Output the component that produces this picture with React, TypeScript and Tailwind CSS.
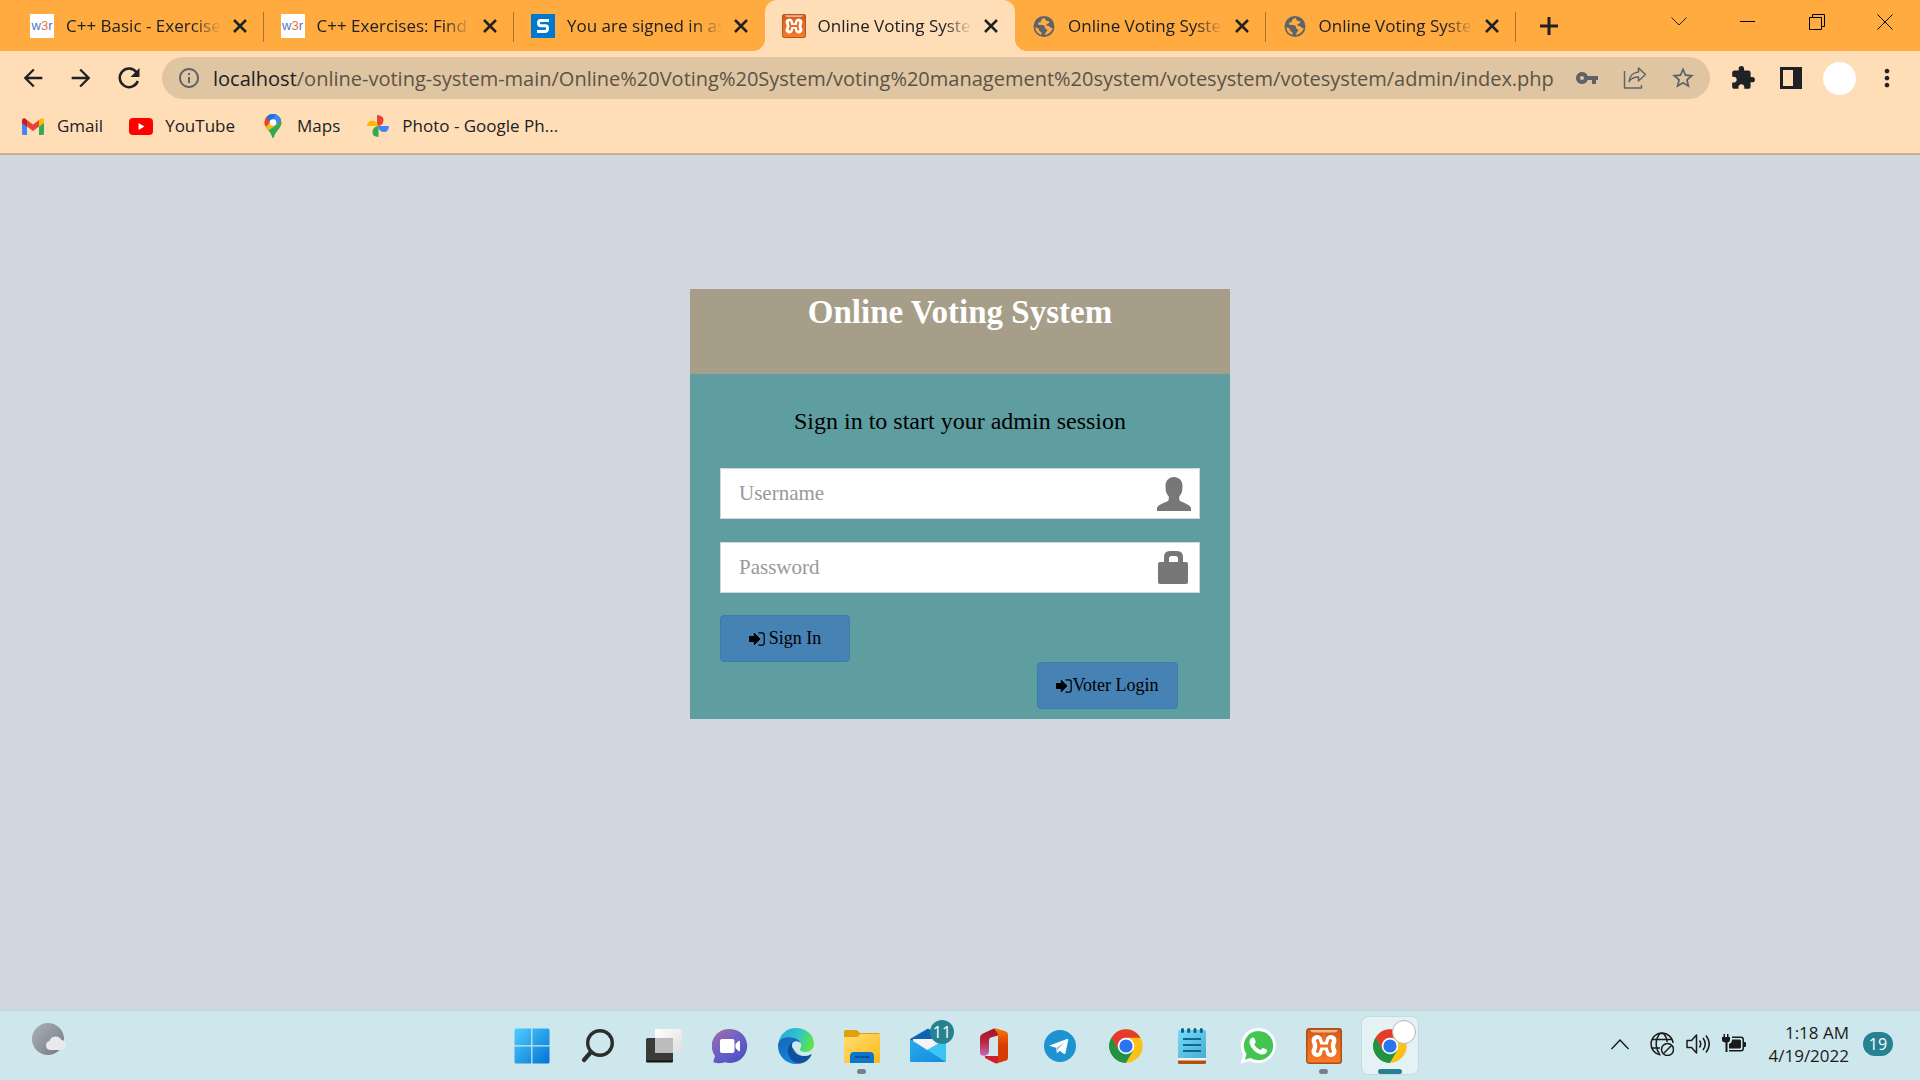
import React, { useId } from "react";
import { MdVpnKey, MdStarBorder, MdExtension, MdMoreVert, MdArrowBack, MdArrowForward, MdInfoOutline } from "react-icons/md";

type IconProps = { className?: string };

function W3r() {
  return (
    <span className="flex size-6 items-center justify-center bg-white font-['Liberation_Sans'] text-[13px] leading-none text-[#4a78c4]">
      w<span className="text-[#e8743b]">3</span>r
    </span>
  );
}

function SFavicon() {
  return (
    <svg viewBox="0 0 24 24" className="size-6">
      <path fill="#0078d0" d="M0 0h24v24H0z" />
      <path fill="none" stroke="#fff" strokeWidth="3" d="M18 6.500H9.500Q7.500 6.500 7.500 9T9.500 11.800h5.500Q16.500 11.800 16.500 14.500T14.500 17.500H6" />
    </svg>
  );
}

function Xampp({ className }: IconProps) {
  const id = useId();
  return (
    <svg viewBox="0 0 36 36" className={className} fill="none">
      <defs>
        <linearGradient id={id} x1="0" y1="0" x2="0" y2="1">
          <stop offset="0" stopColor="#c35a1c" />
          <stop offset=".25" stopColor="#dd6420" />
          <stop offset="1" stopColor="#fb7a24" />
        </linearGradient>
      </defs>
      <rect x=".7" y=".7" width="34.600" height="34.600" rx="2.500" fill={`url(#${id})`} stroke="#a9501a" strokeWidth="1.400" />
      <path d="M4 2h28q-1 2.500-4 2.500H8Q5 4.500 4 2z" fill="#f4b48a" />
      <g strokeLinecap="round">
        <path d="M11 12.500Q14 18 11 23.500M25 12.500Q22 18 25 23.500M13 18h10" stroke="#fff" strokeWidth="11" />
        <path d="M18 7v5.500M18 29v-5.500" stroke="#ec6c22" strokeWidth="3" />
        <path d="M11.500 12.500Q14 18 11.500 23.500M24.500 12.500Q22 18 24.500 23.500M13 18h10" stroke="#ec6c22" strokeWidth="3" />
      </g>
    </svg>
  );
}

function Globe() {
  return (
    <svg viewBox="0 0 24 24" className="size-6">
      <circle cx="12" cy="12.500" r="10.500" fill="#5f6368" />
      <path fill="#ffab40" d="M12.500 4c-2.500.5-3.500 1.500-3.500 3 0 1-1 1.200-2 1.500-1.300.4-1.200 1.500-.5 2.300l3.500.2c2 .1 3 1 3 2.500 0 1.200 1.500 1.300 2.200 2.500.5 1-.8 1.600-1.400 2.400-.5.700-.5 1.600-1.300 2.600 4-.5 7.500-3 8-7-1.500 0-2-.5-3-1.500s-2.500-.3-3-1.300c-.4-1 .8-1.500 1.800-1.700 1.200-.3 1.500-1.500.2-2.200-1-.6-2.500-.3-3-1.200-.3-.7.200-1.600-1-2.100zM3.300 13.500c.3 3.500 2.700 6.500 6.200 7.300 0-1.300.2-2-.6-2.800-.9-.8-2-.9-2-2.200 0-1.500-1.800-2-3.600-2.300z" />
    </svg>
  );
}

function Close() {
  return (
    <svg viewBox="0 0 14 14" className="size-[14px]" fill="none" stroke="#202124" strokeWidth="2.500">
      <path d="M1 1l12 12M13 1L1 13" />
    </svg>
  );
}

const tabs = [
  { icon: <W3r />, title: "C++ Basic - Exercises" },
  { icon: <W3r />, title: "C++ Exercises: Find the" },
  { icon: <SFavicon />, title: "You are signed in as" },
  { icon: <Xampp className="size-6" />, title: "Online Voting System", active: true },
  { icon: <Globe />, title: "Online Voting System" },
  { icon: <Globe />, title: "Online Voting System" },
];

function TabStrip() {
  return (
    <div className="flex h-[51px] bg-[#ffab40] pl-[13px]">
      <div role="tablist" className="flex w-[1503px] min-w-0">
        {tabs.map((t, i) => {
          const sep = !t.active && i !== 2;
          return (
            <div
              key={i}
              role="tab"
              aria-selected={!!t.active}
              className={
                "relative flex min-w-0 flex-1 items-center pl-[17px] pr-[17px] " + (t.active ? "rounded-t-xl bg-[#ffdeb7]" : "")
              }
            >
              <span className="shrink-0">{t.icon}</span>
              <span className="ml-3 min-w-0 flex-1 overflow-hidden whitespace-nowrap text-[17px] text-[#202124] [mask-image:linear-gradient(to_right,black_82%,transparent)]">
                {t.title}
              </span>
              <button aria-label="Close tab" className="ml-3 shrink-0">
                <Close />
              </button>
              {sep && <span className="absolute right-0 top-3 h-[30px] w-px bg-[#a9732f]" />}
              {t.active && (
                <>
                  <span className="absolute -left-3 bottom-0 size-3 bg-[radial-gradient(circle_at_0_0,transparent_12px,#ffdeb7_12px)]" />
                  <span className="absolute -right-3 bottom-0 size-3 bg-[radial-gradient(circle_at_100%_0,transparent_12px,#ffdeb7_12px)]" />
                </>
              )}
            </div>
          );
        })}
      </div>
      <button aria-label="New tab" className="ml-6 self-center">
        <svg viewBox="0 0 18 18" className="size-[18px]" stroke="#202124" strokeWidth="3">
          <path d="M9 0v18M0 9h18" />
        </svg>
      </button>
      <div className="ml-auto flex h-[43px] items-center pr-[3px]">
        <button aria-label="Search tabs" className="flex w-[68px] justify-center">
          <svg viewBox="0 0 16 9" className="h-[9px] w-4" fill="none" stroke="#202124"><path d="M.5.5L8 8 15.500.5" /></svg>
        </button>
        <button aria-label="Minimize" className="flex w-[68px] justify-center">
          <span className="h-px w-[15px] bg-black" />
        </button>
        <button aria-label="Restore" className="flex w-[72px] justify-center">
          <svg viewBox="0 0 16 16" className="size-4" fill="none" stroke="#000"><path d="M.5 3.500h12v12H.5zM3.500 3.500v-3h12v12h-3" /></svg>
        </button>
        <button aria-label="Close" className="flex w-16 justify-center">
          <svg viewBox="0 0 16 16" className="size-4" fill="none" stroke="#000"><path d="M.5.5l15 15M15.500.5l-15 15" /></svg>
        </button>
      </div>
    </div>
  );
}

function Gmail() {
  return (
    <svg viewBox="0 0 22 17" className="h-[17px] w-[22px]">
      <path fill="#4285f4" d="M0 3v12.500Q0 17 1.500 17H5V7z" />
      <path fill="#34a853" d="M22 3v12.500q0 1.500-1.500 1.500H17V7z" />
      <path fill="#ea4335" d="M5 8.500V2l6 4.500L17 2v6.500L11 13z" />
      <path fill="#c5221f" d="M0 2.500V5l5 3.700V2L3.500.7C2-.4 0 .6 0 2.500z" />
      <path fill="#fbbc04" d="M22 2.500V5l-5 3.700V2L18.500.7C20-.4 22 .6 22 2.500z" />
    </svg>
  );
}

function YouTube() {
  return (
    <svg viewBox="0 0 24 17" className="h-[17px] w-6">
      <rect width="24" height="17" rx="4" fill="#f00" />
      <path fill="#fff" d="M9.500 5v7l6-3.500z" />
    </svg>
  );
}

function MapsPin() {
  const id = useId();
  return (
    <svg viewBox="0 0 18 24" className="h-6 w-[18px]">
      <clipPath id={id}>
        <path d="M9 0a8.500 8.500 0 0 0-8.500 8.500c0 3 1.500 5 3.500 7.500s3.500 4.500 4 7q.2 1 1 1t1-1c.5-2.500 2-4.500 4-7s3.500-4.500 3.500-7.500A8.500 8.500 0 0 0 9 0z" />
      </clipPath>
      <g clipPath={`url(#${id})`}>
        <path fill="#34a853" d="M0 0h18v24H0z" />
        <path fill="#fbbc04" d="M0 8l5-2 9 4L3.500 17 0 14z" />
        <path fill="#ea4335" d="M0 0l3 2.500L8 7 1.500 13-2 8z" />
        <path fill="#1a73e8" d="M2 3L7 8l6-8H4z" />
        <path fill="#4285f4" d="M6 9L13-1l7 6-3 1-6 6z" />
      </g>
      <circle cx="9" cy="8.500" r="3.300" fill="#fff" />
    </svg>
  );
}

function Photos() {
  return (
    <svg viewBox="0 0 22 22" className="size-[22px]">
      <path fill="#ea4335" d="M10 0q7 .5 6.500 5.500Q16 11 10 11z" />
      <path fill="#4285f4" d="M22 11q-.5 6.500-5.500 6T11 11z" />
      <path fill="#34a853" d="M11.500 22Q5 21.500 5.500 16.500T11.500 11z" />
      <path fill="#fbbc04" d="M0 11Q.5 5 5.500 5.500T11 11z" />
    </svg>
  );
}

function Reload() {
  return (
    <svg viewBox="0 0 28 28" className="size-7" fill="none">
      <path d="M21.500 8.200A9.300 9.300 0 1 0 22.800 17" stroke="currentColor" strokeWidth="2.500" />
      <path d="M24.500 4v9h-9z" fill="currentColor" />
    </svg>
  );
}

function ShareIcon() {
  return (
    <svg viewBox="0 0 24 24" className="size-6" fill="none" stroke="#5f6368" strokeWidth="1.500" strokeLinejoin="round">
      <path d="M1.500 5v17h17V19" />
      <path d="M15.500 2l7 6.500-7 6.500v-4c-4 0-7.500 1.500-9.500 4.500.5-5.500 4.500-9 9.500-9.500z" />
    </svg>
  );
}

const bookmarks = [
  { icon: <Gmail />, label: "Gmail" },
  { icon: <YouTube />, label: "YouTube" },
  { icon: <MapsPin />, label: "Maps" },
  { icon: <Photos />, label: "Photo - Google Ph..." },
];

function Toolbar() {
  return (
    <div className="border-b-2 border-[#c9ae8f] bg-[#ffdeb7] pt-[6px]">
      <div className="flex h-[42px] items-center text-[#202124]">
        <div className="flex items-center gap-5 pl-[19px]">
          <button aria-label="Back"><MdArrowBack className="size-7" /></button>
          <button aria-label="Forward"><MdArrowForward className="size-7" /></button>
          <button aria-label="Reload"><Reload /></button>
        </div>
        <div className="ml-[19px] flex h-full min-w-0 flex-1 items-center rounded-full bg-[#dfc5a2] pl-[15px] pr-[3px] text-[#5f6368]">
          <MdInfoOutline className="size-6 shrink-0" />
          <p className="ml-3 min-w-0 flex-1 overflow-hidden whitespace-nowrap pt-0.5 text-[20px] leading-[30px] text-[#5c5348]">
            <span className="text-[#202124]">localhost</span>
            /online-voting-system-main/Online%20Voting%20System/voting%20management%20system/votesystem/votesystem/admin/index.php
          </p>
          <div className="flex shrink-0 items-center">
            <button aria-label="Passwords" className="flex w-12 justify-center"><MdVpnKey className="size-6" /></button>
            <button aria-label="Share" className="flex w-12 justify-center"><ShareIcon /></button>
            <button aria-label="Bookmark" className="flex w-12 justify-center"><MdStarBorder className="size-[26px]" /></button>
          </div>
        </div>
        <div className="flex items-center px-[9px]">
          <button aria-label="Extensions" className="flex w-12 justify-center"><MdExtension className="size-[26px]" /></button>
          <button aria-label="Side panel" className="flex w-12 justify-center">
            <svg viewBox="0 0 22 22" className="size-[22px]"><path fill="currentColor" fillRule="evenodd" d="M0 0h22v22H0zM3 3v16h10V3z" /></svg>
          </button>
          <button aria-label="Profile" className="flex w-12 justify-center">
            <span className="size-[33px] rounded-full bg-white" />
          </button>
          <button aria-label="Menu" className="flex w-12 justify-center"><MdMoreVert className="size-7" /></button>
        </div>
      </div>
      <nav className="flex h-[54px] items-center gap-[26px] pl-[21px] text-[17px] text-[#202124]">
        {bookmarks.map((b) => (
          <a key={b.label} href="#" className="flex items-center gap-3">
            <span className="flex w-6 justify-center">{b.icon}</span>
            {b.label}
          </a>
        ))}
      </nav>
    </div>
  );
}

function UserGlyph() {
  return (
    <svg viewBox="0 0 34 34" className="size-[34px]" fill="#777">
      <path d="M17 0c5 0 8.500 3.500 8.500 9 0 5-.8 8-3.300 10.500V22c0 1.500 1 2.200 3 3 3.500 1.500 8.800 4 8.800 6v3H0v-3c0-2 5.300-4.500 8.800-6 2-.8 3-1.500 3-3v-2.500C9.300 17 8.500 14 8.500 9c0-5.500 3.500-9 8.500-9z" />
    </svg>
  );
}

function LockGlyph() {
  return (
    <svg viewBox="0 0 30 33" className="h-[33px] w-[30px]" fill="#777">
      <path fillRule="evenodd" d="M6 11V6q0-6 6-6h7q6 0 6 6v5h3q2 0 2 2v18q0 2-2 2H2q-2 0-2-2V13q0-2 2-2zm5 0h9V7.500Q20 5 17.500 5h-4Q11 5 11 7.500z" />
    </svg>
  );
}

function SignInGlyph() {
  return (
    <svg viewBox="0 0 16 14" className="h-[14px] w-4 shrink-0">
      <path d="M.5 4.500h4.800V1.200L11 7l-5.700 5.800V9.500H.5z" stroke="#000" strokeLinejoin="round" />
      <path d="M9.500.8H13q2.200 0 2.200 2.200v8q0 2.200-2.200 2.200H9.500" fill="none" stroke="#000" strokeWidth="1.200" />
    </svg>
  );
}

function Login() {
  return (
    <main className="flex flex-1 items-start justify-center bg-[#d2d6de] pt-[134px] font-['Liberation_Serif',serif]">
      <section className="w-[540px]">
        <header className="h-[85px] bg-[#a69e88] pt-1">
          <h1 className="text-center text-[33px] font-bold leading-[38px] text-white">Online Voting System</h1>
        </header>
        <div className="bg-[#5f9ea0] px-[30px] pb-[10px] pt-[30px] text-black">
          <p className="text-center text-[24px] leading-[34px]">Sign in to start your admin session</p>
          <form className="mt-[30px]" onSubmit={(e) => e.preventDefault()}>
            <div className="relative">
              <input aria-label="Username" placeholder="Username" className="block h-[51px] w-full border border-[#d2d6de] bg-white px-[18px] text-[21px] placeholder:text-[#999]" />
              <span className="pointer-events-none absolute right-[9px] top-[9px]"><UserGlyph /></span>
            </div>
            <div className="relative mt-[23px]">
              <input type="password" aria-label="Password" placeholder="Password" className="block h-[51px] w-full border border-[#d2d6de] bg-white px-[18px] text-[21px] placeholder:text-[#999]" />
              <span className="pointer-events-none absolute right-3 top-[9px]"><LockGlyph /></span>
            </div>
            <button type="submit" className="mt-[22px] flex h-[47px] w-[130px] items-center justify-center gap-1 rounded-[4px] border border-[#367fa9] bg-[#4682b4] text-[18px]">
              <SignInGlyph />
              Sign In
            </button>
            <div className="flex justify-end pr-[22px]">
              <a href="#" className="flex h-[47px] w-[141px] items-center justify-center rounded-[4px] border border-[#367fa9] bg-[#4682b4] text-[18px]">
                <SignInGlyph />
                Voter Login
              </a>
            </div>
          </form>
        </div>
      </section>
    </main>
  );
}

function Start() {
  const id = useId();
  return (
    <svg viewBox="0 0 36 36" className="size-9">
      <linearGradient id={id} gradientUnits="userSpaceOnUse" x1="0" y1="0" x2="36" y2="36">
        <stop offset="0" stopColor="#4fd0ff" /><stop offset="1" stopColor="#0072d2" />
      </linearGradient>
      <path fill={`url(#${id})`} d="M2 .5h15.200v16.700H.5V2Q.5.500 2 .5zM18.400.5H34Q35.500.5 35.500 2v15.200H18.400zM.5 18.400h16.700v17.100H2Q.5 35.500.5 34zM18.400 18.400h17.100V34q0 1.500-1.500 1.500H18.400z" />
    </svg>
  );
}

function Search() {
  return (
    <svg viewBox="0 0 36 36" className="size-9" fill="none" stroke="#2d2d2d" strokeLinecap="round">
      <circle cx="20" cy="15" r="12.300" strokeWidth="3.400" />
      <path d="M11 24L4 32" strokeWidth="4.200" />
    </svg>
  );
}

function TaskView() {
  const id = useId();
  return (
    <svg viewBox="0 0 36 36" className="size-9">
      <linearGradient id={id} x1="0" y1="0" x2="1" y2="1"><stop offset="0" stopColor="#fff" /><stop offset="1" stopColor="#dedede" /></linearGradient>
      <rect x="0" y="10" width="27" height="24" rx="1.500" fill="#3a3a38" />
      <path d="M0 32.500h27V33q0 1.500-1.500 1.500h-24Q0 34.500 0 33z" fill="#111" />
      <rect x="9" y="1" width="27" height="24" rx="1" fill={`url(#${id})`} />
      <path d="M9 10h18v15H9z" fill="#bcbcbc" />
    </svg>
  );
}

function Chat() {
  const id = useId();
  return (
    <svg viewBox="0 0 36 36" className="size-9">
      <linearGradient id={id} x1="0" y1=".2" x2=".6" y2="1"><stop offset="0" stopColor="#9b6aae" /><stop offset=".45" stopColor="#6f62c4" /><stop offset="1" stopColor="#5152c4" /></linearGradient>
      <path fill={`url(#${id})`} d="M18 1a17 17 0 1 1-5 33.200Q7 36 2 34.500q-1-.5-.5-1.500l1.500-5A17 17 0 0 1 18 1z" />
      <rect x="8" y="11" width="14.500" height="14" rx="2" fill="#fff" />
      <path fill="#fff" d="M23.500 16l3-3q1.500-1 1.500 1v8q0 2-1.500 1l-3-3z" />
    </svg>
  );
}

function Edge() {
  const id = useId();
  return (
    <svg viewBox="0 0 36 36" className="size-9">
      <linearGradient id={id + "a"} x1="0" y1=".3" x2="1" y2=".6"><stop offset="0" stopColor="#2aa5e0" /><stop offset=".5" stopColor="#2ec6c8" /><stop offset="1" stopColor="#62e63c" /></linearGradient>
      <linearGradient id={id + "b"} x1="0" y1="0" x2=".4" y2="1"><stop offset="0" stopColor="#1566b8" /><stop offset="1" stopColor="#1285dc" /></linearGradient>
      <path fill={`url(#${id}a)`} d="M.5 15C2 6 9 0 18 0c10 0 18 7 18 15.500C36 21 32 24 27.500 24c-4 0-6-1.500-5.500-3 1-2 1.500-3 1-5C22 11 16 9 11 9S2.500 11 .5 15z" />
      <path fill={`url(#${id}b)`} d="M0 18C0 12 5 9 11 9c6 0 11 3 12 6-1-1-3-1.500-5-1.500-4 1-7 5-7 10C11 29 15 34 20 36h-2C8 36 0 28 0 18z" />
      <path fill="#10509a" d="M14 14.500c-3 2-5 6-4 10.500 1 5 5 10 10.500 10.700C26 35.500 31 32 33.500 27c.3-.8-.2-1-.8-.7-5 2.200-11 1.700-14.700-2.300-3-3-4-6-3-8.500z" />
      <circle cx="18" cy="17.500" r="4" fill="#cfe7ec" />
      <path fill="#cfe7ec" d="M15 20c2 5 8 8 18 5l-1 2c-5 2-11 1-14-2-2-2-3-4-3-5z" />
    </svg>
  );
}

function Explorer() {
  const id = useId();
  return (
    <svg viewBox="0 0 36 36" className="size-9">
      <linearGradient id={id} x1="0" y1="0" x2="1" y2="1"><stop offset="0" stopColor="#ffdf70" /><stop offset="1" stopColor="#fbb81c" /></linearGradient>
      <path fill="#e0a008" d="M1.500 2H12q1 0 1.700.8L16 5h18.500Q36 5 36 6.500V12H0V3.500Q0 2 1.500 2z" />
      <path fill={`url(#${id})`} d="M0 9h12q1.500 0 2.500-1l2-2H36v27.500q0 1.500-1.500 1.500h-33Q0 35 0 33.500z" />
      <path fill="#0c76c9" d="M6 35v-7q0-4 4-4h16q4 0 4 4v7z" />
      <path stroke="#0a4f92" strokeWidth="2" strokeLinecap="round" d="M12 29h13" />
    </svg>
  );
}

function Mail() {
  const id = useId();
  return (
    <svg viewBox="0 0 36 36" className="size-9">
      <linearGradient id={id} x1="0" y1="0" x2="1" y2="1"><stop offset="0" stopColor="#26aceb" /><stop offset="1" stopColor="#1689de" /></linearGradient>
      <path fill="#0d63b4" d="M0 11L18 .5 36 11v6H0z" />
      <path fill="#f4f4f4" d="M3 11h30v5L18 25 3 15z" />
      <path fill="#3cc5f4" d="M36 11v23L16 22.500z" />
      <path fill={`url(#${id})`} d="M0 11l36 23H1.500Q0 34 0 32.500z" />
    </svg>
  );
}

function Office() {
  const id = useId();
  return (
    <svg viewBox="0 0 36 36" className="size-9">
      <linearGradient id={id} x1="0" y1="0" x2="0" y2="1"><stop offset="0" stopColor="#a4141c" /><stop offset=".5" stopColor="#b92742" /><stop offset="1" stopColor="#c56ab4" /></linearGradient>
      <linearGradient id={id + "o"} x1="0" y1="0" x2="0" y2="1"><stop offset="0" stopColor="#f8760c" /><stop offset=".5" stopColor="#d83b01" /></linearGradient>
      <path fill={`url(#${id})`} d="M18 .5l4 1v6l-7 2q-2 .7-2 3v11q0 2-1.500 3l-2 1q-5.500 1-5.500-3V10q0-3 3-4.500z" />
      <path fill={`url(#${id}o)`} d="M18 .5q1-.3 3 .3l8.500 2.500q2.500.7 2.500 3.500v23q0 2.500-2.500 3L22 35V6z" />
      <path fill="#cf1f35" d="M9 28h13v7.300q-2 .3-4-.5l-8-4.300Q8 29 9 28z" />
    </svg>
  );
}

function Telegram() {
  return (
    <svg viewBox="0 0 36 36" className="size-9">
      <circle cx="18" cy="18" r="16" fill="#1d93d2" />
      <path fill="#fff" d="M7.500 17.500L25 11q1.500-.4 1.200 1.300l-2.700 12.700q-.4 1.500-1.800.7l-4-3-2 2q-.8.600-1-.5l-.7-4.400-5.800-1.700q-1.500-.3-.7-.6z" />
      <path fill="#a9c9dd" d="M14 20l8.500-5.500-6.500 7-.7 3.500z" />
    </svg>
  );
}

function Chrome() {
  return (
    <svg viewBox="0 0 36 36" className="size-9">
      <circle cx="18" cy="18" r="16.700" fill="#fbc116" />
      <path fill="#229342" d="M3.500 9.650A16.700 16.700 0 0 0 18 34.700l7.200-12.500-14.400 0z" />
      <path fill="#e33b2e" d="M3.540 9.650A16.700 16.700 0 0 1 32.460 9.650H18L10.800 22.200z" />
      <path fill="#229342" d="M3.540 9.650L10.800 22.200l7.200 3L18 34.700A16.700 16.700 0 0 1 3.540 9.650z" />
      <circle cx="18" cy="18" r="8.300" fill="#fff" />
      <circle cx="18" cy="18" r="6.600" fill="#2a74f0" />
    </svg>
  );
}

function Notepad() {
  const id = useId();
  return (
    <svg viewBox="0 0 36 36" className="size-9">
      <linearGradient id={id} x1="0" y1="0" x2="1" y2="1"><stop offset="0" stopColor="#7bdaf4" /><stop offset="1" stopColor="#44aed4" /></linearGradient>
      <path fill="#b4500c" d="M4 30h28v4.500q0 1.500-1.500 1.500h-25Q4 36 4 34.500z" />
      <path fill="#f2f2f2" d="M4 28h28v4.500H4z" />
      <path fill={`url(#${id})`} d="M5.500 2h25Q32 2 32 3.500V30H4V3.500Q4 2 5.500 2z" />
      <path stroke="#0a5f8c" strokeWidth="3" strokeLinecap="round" d="M8.500 1.500v2M14.700 1.500v2M21 1.500v2M27.300 1.500v2" />
      <path stroke="#0a6a94" strokeWidth="2" d="M9 11h18M9 17h18M9 23h18" />
    </svg>
  );
}

function WhatsApp() {
  return (
    <svg viewBox="0 0 36 36" className="size-9">
      <path fill="#fff" d="M18.500 0a17.500 17.500 0 1 1-8.300 33L.5 35.700l2.600-9.500A17.500 17.500 0 0 1 18.500 0z" />
      <path fill="#42c552" d="M18.500 3a14.600 14.600 0 1 1-7.800 26.900L5 31.500l1.500-5.600A14.600 14.600 0 0 1 18.500 3z" />
      <path fill="#fff" d="M13 9.500c.8 0 1.200.3 1.500 1l1.200 3c.2.600 0 1-1.500 2.800 1.500 3 3.500 4.500 6.500 5.700 1.500-2 2-2.300 2.700-2l3 1.500c.6.300.8.600.7 1.300-.3 2.500-2.500 3.700-4.600 3.700-6 0-13-7-13-12.500 0-2 1.500-4.500 3.500-4.500z" />
    </svg>
  );
}

type App = { name: string; icon: React.ReactNode; running?: boolean; active?: boolean; badge?: string };

const apps: App[] = [
  { name: "Start", icon: <Start /> },
  { name: "Search", icon: <Search /> },
  { name: "Task view", icon: <TaskView /> },
  { name: "Chat", icon: <Chat /> },
  { name: "Edge", icon: <Edge /> },
  { name: "File Explorer", icon: <Explorer />, running: true },
  { name: "Mail", icon: <Mail />, badge: "11" },
  { name: "Office", icon: <Office /> },
  { name: "Telegram", icon: <Telegram /> },
  { name: "Chrome", icon: <Chrome /> },
  { name: "Notepad", icon: <Notepad /> },
  { name: "WhatsApp", icon: <WhatsApp /> },
  { name: "XAMPP", icon: <Xampp className="size-9" />, running: true },
  { name: "Chrome window", icon: <Chrome />, active: true },
];

function Tray() {
  return (
    <div className="flex items-center justify-end pb-[3px] pr-[27px] text-[#1b1b1b]">
      <button aria-label="Show hidden icons">
        <svg viewBox="0 0 18 11" className="h-[11px] w-[18px]" fill="none" stroke="currentColor" strokeWidth="1.400"><path d="M.5 10L9 1l8.500 9" /></svg>
      </button>
      <button aria-label="Network, volume and battery" className="ml-[21px] flex items-center gap-3">
        <svg viewBox="0 0 24 24" className="size-6" fill="none" stroke="currentColor" strokeWidth="1.500">
          <path d="M10.500 22.900A11 11 0 1 1 23 11" />
          <path d="M9.500 22C5 16 5 7 10 1.500h3.500C15.800 4 17 7 17.200 10M2 7.500h20M2 16h8" />
          <circle cx="17.500" cy="17.500" r="6" />
          <path d="M13.500 21.500l8-8" />
        </svg>
        <svg viewBox="0 0 24 24" className="size-6" fill="none" stroke="currentColor" strokeWidth="1.500">
          <path d="M1 8.500h4.500l5-5.500v18l-5-5.500H1z" strokeLinejoin="round" />
          <path d="M13.500 8.500q2.500 3.500 0 7M17 6q4.500 6 0 12M20 3.500q6.500 8.500 0 17" />
        </svg>
        <svg viewBox="0 0 24 24" className="size-6" fill="currentColor">
          <path d="M1.500 2H3v3h2V2h1.500v3H8v3q0 2-2.500 2.500V20H3.500v-9.500Q0 10 0 8V5h1.500z" />
          <path fillRule="evenodd" d="M10 4.500h9q3 0 3 3V10h1q1 0 1 1v3q0 1-1 1h-1v1.500q0 3-3 3H7V18h12q1.500 0 1.500-1.500v-9Q20.500 6 19 6h-9z" />
          <path d="M10 7.500h7.500q1.500 0 1.500 1.500v6q0 1.500-1.500 1.500H7V12q3-1 3-4.500z" />
        </svg>
      </button>
      <button className="ml-[22px] text-right text-[17px] leading-[23px]">
        <span className="block">1:18 AM</span>
        <span className="block">4/19/2022</span>
      </button>
      <button aria-label="19 notifications" className="ml-[14px] h-6 w-[30px] rounded-full bg-[#268291] text-center text-[16px] leading-6 text-white">19</button>
    </div>
  );
}

function Taskbar() {
  return (
    <footer className="grid h-[71px] grid-cols-[1fr_auto_1fr] items-center border-t-2 border-[#c3d8df] bg-[#cde7ec]">
      <button aria-label="Weather" className="mb-[14px] ml-8 justify-self-start">
        <svg viewBox="0 0 34 32" className="h-8 w-[34px]">
          <defs>
            <linearGradient id="moon" x1="0" y1="0" x2="1" y2="1"><stop offset="0" stopColor="#abb0ba" /><stop offset="1" stopColor="#747a82" /></linearGradient>
          </defs>
          <circle cx="16" cy="16" r="16" fill="url(#moon)" />
          <path fill="#e9eaee" d="M18 27a4.600 4.600 0 0 1-.5-9 6.500 6.500 0 0 1 12-1 5 5 0 0 1-.5 10z" />
        </svg>
      </button>
      <div className="flex gap-[10px] pl-0.5">
        {apps.map((a) => (
          <button
            key={a.name}
            aria-label={a.name}
            className={
              "relative flex h-[57px] w-14 items-center justify-center rounded-md " +
              (a.active ? "bg-[#e4f1f5] shadow-[0_0_0_1px_#c3dbe1]" : "")
            }
          >
            {a.icon}
            {a.badge && <span className="absolute right-0.5 top-[3px] size-6 rounded-full bg-[#268291] text-[16px] leading-6 text-white">{a.badge}</span>}
            {a.active && <span className="absolute right-0.5 top-[3px] size-6 rounded-full border border-[#b5b5b5] bg-white" />}
            {a.active && <span className="absolute bottom-0 left-4 h-[5px] w-6 rounded-full bg-[#268291]" />}
            {a.running && <span className="absolute bottom-0 left-[23px] h-[5px] w-[9px] rounded-full bg-[#768286]" />}
          </button>
        ))}
      </div>
      <Tray />
    </footer>
  );
}

export default function App() {
  return (
    <div className="flex min-h-screen flex-col font-['Open_Sans',sans-serif]">
      <TabStrip />
      <Toolbar />
      <Login />
      <Taskbar />
    </div>
  );
}
